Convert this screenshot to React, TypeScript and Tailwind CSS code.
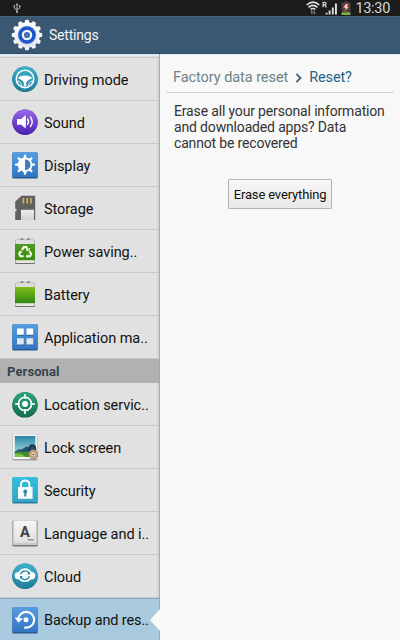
import type { ReactNode } from 'react'

function GearLogo() {
  const teeth = Array.from({ length: 12 }, (_, i) => i * 30)
  return (
    <svg width="32" height="32" viewBox="0 0 32 32">
      <defs>
        <linearGradient id="gear" x1="0" y1="0" x2="0" y2="1">
          <stop offset="0" stopColor="#ffffff" />
          <stop offset="1" stopColor="#e3e7ec" />
        </linearGradient>
        <radialGradient id="gearBlue">
          <stop offset="0.4" stopColor="#1746b0" />
          <stop offset="1" stopColor="#1f5be0" />
        </radialGradient>
      </defs>
      {teeth.map((a) => (
        <path key={a} d="M13.2 6l.9-4.4q.2-.8 1-.8h1.8q.8 0 1 .8l.9 4.4z" fill="#f3f5f8" transform={`rotate(${a} 16 16)`} />
      ))}
      <circle cx="16" cy="16" r="12.8" fill="url(#gear)" />
      <circle cx="16" cy="16" r="9" fill="url(#gearBlue)" stroke="#8fa5cc" strokeWidth="0.6" />
      <circle cx="16" cy="16" r="4.2" fill="#4a72b0" stroke="#f2f6fa" strokeWidth="2.2" />
    </svg>
  )
}

function UsbIcon() {
  return (
    <svg width="8" height="10" viewBox="0 0 8 10" fill="none" stroke="#c4c4c4" strokeWidth="0.9">
      <path d="M4 1v8M1.3 3.2v2L4 7.2M6.7 3v2.2L4 6.4" />
      <path d="M4 0l1.2 1.8H2.8z" fill="#c4c4c4" stroke="none" />
      <circle cx="4" cy="9" r="0.9" fill="#c4c4c4" stroke="none" />
      <path d="M0.6 2.8h1.5M6 2.8h1.5" strokeWidth="1.3" />
    </svg>
  )
}

function WifiIcon() {
  return (
    <svg width="14" height="14" viewBox="0 0 14 14" fill="none" stroke="#dedede">
      <path d="M0.7 4Q7-1.7 13.3 4M2.6 6.3Q7 2.4 11.4 6.3M4.6 8.5Q7 6.5 9.4 8.5" strokeWidth="1.6" />
      <path d="M5.9 13V9.8M4.8 11l1.1-1.3M8.2 9.6v3.4M9.3 11.8l-1.1 1.4" stroke="#a9a9a9" strokeWidth="0.9" />
    </svg>
  )
}

function SignalIcon() {
  return (
    <svg width="16" height="14" viewBox="0 0 16 14" fill="#e4e4e4">
      <path d="M3.7 11.8h1.8v1.7H3.7zM6.7 9.6h1.8v3.9H6.7zM9.9 6.6h1.8v6.9H9.9zM13 2.6h1.9v10.9H13z" />
      <path d="M1.1 6.3V1.3h1.8q1.2 0 1.2 1.3t-1.2 1.3H1.1M2.6 3.9L4.4 6.3" fill="none" stroke="#e4e4e4" strokeWidth="1.1" />
    </svg>
  )
}

function ChargeIcon() {
  return (
    <svg width="10" height="14" viewBox="0 0 10 14">
      <path d="M3.2 0.4h3.6v1.3h2.5V14H0.7V1.7h2.5z" fill="#494640" />
      <path d="M0.6 11.4h8.8v2.6H0.6z" fill="#79b83f" />
      <path d="M4.4 3h3.2L6 5.8h2.1L3.7 10.6 4.6 7H2.4z" fill="#f6e9e2" stroke="#b8352b" strokeWidth="0.8" />
    </svg>
  )
}

function DrivingIcon() {
  return (
    <>
      <circle cx="13" cy="13.3" r="12.8" fill="#176a80" />
      <circle cx="13" cy="12.9" r="12.5" fill="url(#teal)" />
      <circle cx="13" cy="12.9" r="8.7" fill="none" stroke="#fff" strokeWidth="1.6" />
      <path d="M5.8 12.3Q7.6 9.6 13 9.6t7.2 2.7l-3.8 1.6-2.2 2.5v3.9h-2.4v-3.9l-2.2-2.5z" fill="#fff" />
      <path d="M5.4 15q3.6.2 4.4 5M20.6 15q-3.6.2-4.4 5" fill="none" stroke="#fff" strokeWidth="0.9" />
    </>
  )
}

function SoundIcon() {
  return (
    <>
      <circle cx="13" cy="13.3" r="12.7" fill="#43208f" />
      <circle cx="13" cy="12.9" r="12.5" fill="url(#violet)" />
      <path d="M5 9.9h4.2l4.6-3.9v13.4l-4.6-3.7H5z" fill="#fff" />
      <path d="M15.5 10q2 2.7 0 5.4M18.4 7.8q3.6 4.9 0 9.8" fill="none" stroke="#fff" strokeWidth="1.4" strokeLinecap="round" />
    </>
  )
}

function BlueTile() {
  return (
    <>
      <rect x="0.3" y="0.4" width="25.4" height="26" rx="1" fill="#285b91" />
      <rect x="0.3" y="0.2" width="25.4" height="24.8" rx="1" fill="url(#blue)" />
    </>
  )
}

function DisplayIcon() {
  const rays = [0, 45, 90, 135, 180, 225, 270, 315]
  return (
    <>
      <BlueTile />
      {rays.map((a) => (
        <path key={a} d="M11.4 6.5l.7-3.8h1.8l.7 3.8z" fill="#fff" transform={`rotate(${a} 13 12.7)`} />
      ))}
      <circle cx="13" cy="12.7" r="6.4" fill="#4280bd" stroke="#fff" strokeWidth="1.7" />
      <path d="M13 6v13.4a6.7 6.7 0 0 1 0-13.4z" fill="#fff" />
    </>
  )
}

function StorageIcon() {
  return (
    <>
      <path d="M9.6.7H22.5q.7 0 .7.7V25H3.2v-8.8h1.2v-2.4H3.2V6.4z" fill="#61615f" />
      <path d="M10.6 3h1.6v5.4h-1.6zM14.4 3H16v5.4h-1.6zM18.2 3h1.6v5.4h-1.6z" fill="#cfb754" />
      <path d="M9 14.8h13V25H9z" fill="url(#grey)" />
    </>
  )
}

function BatteryBody({ recycle }: { recycle?: boolean }) {
  return (
    <>
      <path d="M8.4.2h3v2h-3zM14.8.2h3v2h-3z" fill="#8f8f8f" />
      <rect x="3" y="1.8" width="20" height="24.2" rx="1.6" fill="#6d7168" />
      <rect x="3.3" y="2" width="19.4" height="23" rx="1.4" fill="url(#metal)" />
      <path d="M3 6h20v16.2H3z" fill={recycle ? 'url(#greenDark)' : 'url(#green)'} />
      {recycle && (
        <g fill="none" stroke="#f4faea" strokeWidth="2.1" transform="translate(0 .6)">
          <path d="M9.9 11.5l1.8-3h2.6l1.5 2.5M17.6 12.7l1.5 2.7-1 2.2h-3.2M11.7 17.6H8.4l-1.2-2.2 1.3-2.5" />
          <path d="M14.1 11.4l2.8.9.7-2.9M15.7 15.9L14 17.7l1.7 1.7M6.8 13.7l2.1-1.3 1.1 2" strokeWidth="1" />
        </g>
      )}
    </>
  )
}

function AppsIcon() {
  return (
    <>
      <BlueTile />
      <path d="M5 5.6h6.8v6.2H5zM14.4 5.6h6.8v6.2h-6.8zM5 15.2h6.8v6.2H5zM14.4 15.2h6.8v6.2h-6.8z" fill="#2c65a4" />
      <path d="M5 4.5h6.8v6.2H5zM14.4 4.5h6.8v6.2h-6.8z" fill="#fff" />
      <path d="M5 14.2h6.8v6.2H5zM14.4 14.2h6.8v6.2h-6.8z" fill="#dfe5ea" />
    </>
  )
}

function LocationIcon() {
  return (
    <>
      <circle cx="13" cy="13.9" r="12.7" fill="#145944" />
      <circle cx="13" cy="13.5" r="12.4" fill="url(#emerald)" />
      <circle cx="13" cy="12.9" r="6.6" fill="none" stroke="#fff" strokeWidth="1.6" />
      <circle cx="13" cy="12.9" r="3" fill="#fff" />
      <path d="M13 3.1v4.6M13 18.1v4.8M3.2 12.9h4.6M18.2 12.9h4.6" stroke="#fff" strokeWidth="1.7" />
    </>
  )
}

function LockScreenIcon() {
  return (
    <>
      <rect x="0.6" y="0.5" width="24.8" height="25.8" fill="#84888a" />
      <rect x="0.8" y="0.3" width="24.4" height="24.9" fill="#f5f7f7" />
      <rect x="2.8" y="2" width="20.6" height="21" fill="url(#sky)" />
      <path d="M2.8 17.4l4-1.8 3.2-.4 4.4-2.6 3.4 1.2 1.8-3.4 3.8 3v6H2.8z" fill="#23526c" />
      <path d="M2.8 18.6q4-2 8-.6 6-1 12.6.2V23H2.8z" fill="#3f8d31" />
      <path d="M2.8 19.8q7-1 10.6 3.2H2.8z" fill="#7fc343" />
      <path d="M17.2 17.4v-3q.4-3.3 3.2-3.3 2.8.2 3 3.2v2" fill="none" stroke="#1d3a4c" strokeWidth="1.6" />
      <circle cx="21.4" cy="20.4" r="4.6" fill="#d2b48c" stroke="#806440" strokeWidth="0.7" />
      <circle cx="21.4" cy="20.4" r="2.7" fill="#f2e8d6" stroke="#94764c" strokeWidth="0.9" />
      <circle cx="21.4" cy="20.4" r="1" fill="#79572d" />
    </>
  )
}

function SecurityIcon() {
  return (
    <>
      <rect x="0.4" y="0.4" width="25.2" height="26" rx="1" fill="#267c98" />
      <rect x="0.4" y="0.2" width="25.2" height="24.8" rx="1" fill="url(#cyan)" />
      <path d="M9 11V7.4a4.2 4 0 0 1 8.4 0V11" fill="none" stroke="#fff" strokeWidth="2" />
      <path d="M6 10h14.6v11.8H6z" fill="#fafdfe" />
      <circle cx="13.3" cy="14.6" r="2" fill="#2b8aa8" />
      <path d="M12.4 15.4h1.8l.2 4.2h-2.2z" fill="#2b8aa8" />
    </>
  )
}

function LanguageIcon() {
  return (
    <>
      <rect x="0.4" y="0.5" width="25.2" height="26" rx="1" fill="#77797c" />
      <rect x="0.7" y="0.3" width="24.6" height="24.7" rx="1" fill="#c9cacc" />
      <path d="M2 .6h22v22.2H2z" fill="url(#key)" />
      <text x="13" y="17.4" textAnchor="middle" fontFamily="Roboto, sans-serif" fontSize="14.5" fontWeight="800" fill="#444">
        A
      </text>
      <path d="M15.8 19.8h6" stroke="#666" strokeWidth="1" />
    </>
  )
}

function CloudIcon() {
  return (
    <>
      <circle cx="13" cy="13.3" r="12.8" fill="#1b6c82" />
      <circle cx="13" cy="12.9" r="12.5" fill="url(#teal)" />
      <path d="M6.8 8.7q1.9-3.5 6.2-3.5t6.2 3.5q4.2.4 4.2 3.9 0 3.8-4.4 4-2.2 2.5-6 2.5t-6-2.5q-4.4-.2-4.4-4 0-3.5 4.2-3.9z" fill="#fff" />
      <path d="M8.6 11.4a4.6 4.6 0 0 1 8.6-.8M17.4 13.1a4.6 4.6 0 0 1-8.6.8" fill="none" stroke="#278ba5" strokeWidth="1.3" />
      <path d="M18 8.6v3h-3zM8 15.9v-3h3z" fill="#278ba5" />
    </>
  )
}

function BackupIcon() {
  return (
    <>
      <BlueTile />
      <path d="M6.2 12.3a8 7.9 0 1 1 6 8.1" fill="none" stroke="#fff" strokeWidth="2.1" />
      <path d="M2.6 10.2l8.4 1.4-4.6 4.2z" fill="#fff" />
      <circle cx="14" cy="12.8" r="2.5" fill="#fff" />
    </>
  )
}

// Shared gradients for the list icons
function IconDefs() {
  const ramps = [
    ['teal', '#3fb2c9', '#1b809c'],
    ['violet', '#9a68ea', '#4a22b4'],
    ['blue', '#559ce0', '#3275c4'],
    ['grey', '#ececec', '#d2d2d2'],
    ['metal', '#dcdcdc', '#e6e8e2'],
    ['green', '#84bc1a', '#2f8a12'],
    ['greenDark', '#4f9a22', '#3c8a10'],
    ['emerald', '#2ba579', '#137052'],
    ['sky', '#2a86a8', '#b8e6e8'],
    ['cyan', '#2fc0e0', '#35a4c4'],
    ['key', '#f6f6f6', '#e0e0e1'],
  ]
  return (
    <svg className="absolute" width="0" height="0">
      <defs>
        {ramps.map(([id, from, to]) => (
          <linearGradient key={id} id={id} x1="0" y1="0" x2="0" y2="1">
            <stop offset="0" stopColor={from} />
            <stop offset="1" stopColor={to} />
          </linearGradient>
        ))}
      </defs>
    </svg>
  )
}

type Item = { label: string; icon: ReactNode }

const deviceItems: Item[] = [
  { label: 'Driving mode', icon: <DrivingIcon /> },
  { label: 'Sound', icon: <SoundIcon /> },
  { label: 'Display', icon: <DisplayIcon /> },
  { label: 'Storage', icon: <StorageIcon /> },
  { label: 'Power saving..', icon: <BatteryBody recycle /> },
  { label: 'Battery', icon: <BatteryBody /> },
  { label: 'Application ma..', icon: <AppsIcon /> },
]

const personalItems: Item[] = [
  { label: 'Location servic..', icon: <LocationIcon /> },
  { label: 'Lock screen', icon: <LockScreenIcon /> },
  { label: 'Security', icon: <SecurityIcon /> },
  { label: 'Language and i..', icon: <LanguageIcon /> },
  { label: 'Cloud', icon: <CloudIcon /> },
]

function Row({ label, icon, selected }: Item & { selected?: boolean }) {
  return (
    <div
      className={
        selected
          ? 'relative flex h-[43px] shrink-0 items-center border-t border-[#8fa9b8] bg-[#a9cade] pl-3'
          : 'flex h-[43px] shrink-0 items-center border-b border-[#c5c9cd] pl-3'
      }
    >
      <svg className="shrink-0" width="26" height="27" viewBox="0 0 26 27">
        {icon}
      </svg>
      <span
        className={
          selected
            ? 'ml-1.5 pt-px text-[14.5px] tracking-[-0.13px] whitespace-nowrap text-[#111]'
            : 'ml-1.5 pt-[3px] text-[14.5px] tracking-[-0.06px] whitespace-nowrap text-[#111]'
        }
      >
        {label}
      </span>
      {selected && (
        <svg className="absolute top-[10px] right-[-1px]" width="10" height="22" viewBox="0 0 10 22">
          <path d="M10 0v22L0 11z" fill="#f8f8f8" />
        </svg>
      )}
    </div>
  )
}

export default function App() {
  return (
    <div className="flex h-[640px] w-[400px] flex-col overflow-hidden bg-[#f8f8f8] font-['Roboto',sans-serif]">
      <IconDefs />

      {/* Status bar */}
      <div className="flex h-4 shrink-0 items-center bg-[#1c1c1c] pr-[10px] pl-[13px]">
        <UsbIcon />
        <div className="ml-auto flex items-center">
          <WifiIcon />
          <div className="ml-[2px]">
            <SignalIcon />
          </div>
          <div className="ml-[3px]">
            <ChargeIcon />
          </div>
          <span className="ml-1 pt-[2px] text-[14.5px] leading-4 tracking-[-0.3px] text-[#d8d8d8]">13:30</span>
        </div>
      </div>

      {/* Title bar */}
      <header className="flex h-[38px] shrink-0 items-center border-t border-b border-t-[#45657e] border-b-[#2f4d66] bg-[#3b5872] pl-[11px]">
        <GearLogo />
        <h1 className="ml-[6px] pt-px text-[14px] tracking-[-0.2px] text-[#f2f5f7]">Settings</h1>
      </header>

      <div className="flex min-h-0 flex-1">
        <aside className="flex w-40 shrink-0 flex-col border-r border-[#a9a9a9] bg-linear-to-r from-[#e1e1e1] from-98% to-[#d0d0d0]">
          <div className="h-1 shrink-0 border-t-2 border-b border-t-[#dcebf3] border-b-[#c5c9cd]" />
          {deviceItems.map((item) => (
            <Row key={item.label} {...item} />
          ))}
          <div className="flex h-6 shrink-0 items-center bg-[#b1b1b1] pt-px pl-[7px] text-[13px] font-bold tracking-[0.1px] text-[#34444f]">
            Personal
          </div>
          {personalItems.map((item) => (
            <Row key={item.label} {...item} />
          ))}
          <Row label="Backup and res.." icon={<BackupIcon />} selected />
        </aside>

        <main className="flex min-w-0 flex-1 flex-col border-t border-[#e3f1f8] pr-[6px] pl-[6px]">
          <div className="flex h-[38px] shrink-0 items-center border-b border-[#c9d3d8] pt-2 pl-[7px] text-[14.5px]">
            <span className="tracking-[-0.06px] text-[#6d8289]">Factory data reset</span>
            <svg className="mr-[6px] ml-[7px]" width="8" height="10" viewBox="0 0 8 10" fill="none" stroke="#41677a" strokeWidth="1.8">
              <path d="M1.5 1l4 4-4 4" />
            </svg>
            <span className="tracking-[-0.15px] text-[#1c6385]">Reset?</span>
          </div>
          <p className="mt-[10px] pl-2 text-[14px] leading-4 tracking-[-0.16px] text-[#333]">
            Erase all your personal information
            <br />
            and downloaded apps? Data
            <br />
            cannot be recovered
          </p>
          <button className="mt-7 ml-[62px] h-[30px] w-[104px] rounded-[1px] border border-[#b3b3b3] bg-linear-to-b from-[#f7f7f7] to-[#e9e9e9] pt-px text-[13px] tracking-[-0.15px] whitespace-nowrap text-[#111]">
            Erase everything
          </button>
        </main>
      </div>
    </div>
  )
}
